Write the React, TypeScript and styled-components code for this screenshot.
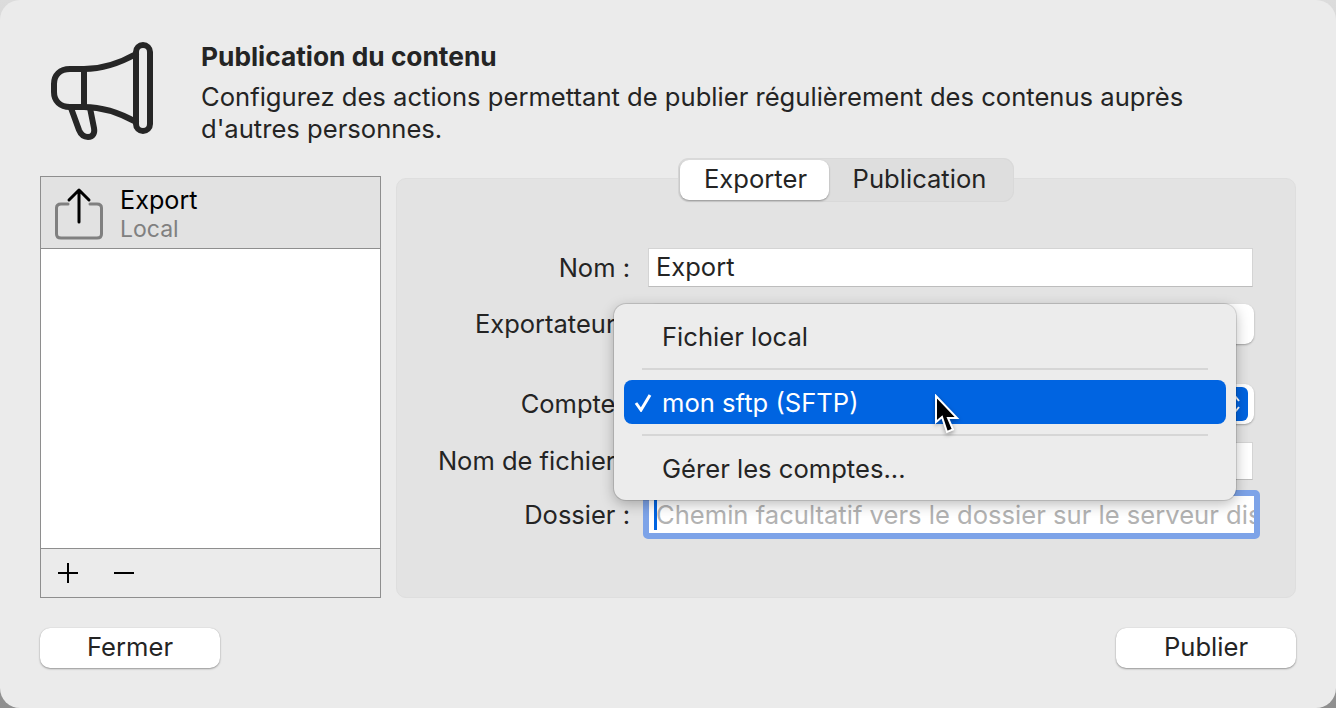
import styled, { createGlobalStyle } from "styled-components"

const GlobalStyle = createGlobalStyle`
  html, body {
    margin: 0;
    padding: 0;
    width: 1336px;
    height: 708px;
    overflow: hidden;
    background: linear-gradient(#dcdcdc, #8f8f8f);
  }
  * {
    box-sizing: border-box;
  }
`

const Window = styled.div`
  width: 1336px;
  height: 708px;
  padding: 40px 40px 0;
  border-radius: 20px;
  background-color: #ebebeb;
  color: #242424;
  font-family: Inter, "Noto Sans", sans-serif;
  font-size: 25.6px;
  line-height: 32px;
  display: flex;
  flex-direction: column;
`

const Header = styled.header`
  height: 136px;
  display: flex;
  align-items: flex-start;
`

const HeaderIcon = styled.svg`
  width: 110px;
  height: 104px;
  margin-left: 8px;
  margin-right: 43px;
  flex: none;
  color: #262626;
`

const HeaderText = styled.div`
  width: 1000px;
  padding-top: 1px;
`

const Title = styled.h1`
  margin: 0 0 8px;
  font-size: 26.3px;
  line-height: 32px;
  font-weight: 700;
`

const Description = styled.p`
  margin: 0;
  font-size: 25.6px;
  line-height: 32px;
`

const Main = styled.div`
  height: 422px;
  display: flex;
  gap: 15px;
`

const List = styled.aside`
  width: 341px;
  flex: none;
  border: 1px solid #8e8e8e;
  display: flex;
  flex-direction: column;
`

const ListItem = styled.div`
  height: 72px;
  padding-left: 12px;
  border-bottom: 1px solid #8e8e8e;
  background-color: #e2e2e2;
  display: flex;
  align-items: center;
  gap: 15px;
`

const ShareIcon = styled.svg`
  width: 52px;
  height: 56px;
  flex: none;
`

const ItemText = styled.div`
  display: flex;
  flex-direction: column;
  padding-top: 5px;
`

const ItemName = styled.span`
  color: #000;
  font-size: 25.2px;
  line-height: 29px;
`

const ItemKind = styled.span`
  color: #808080;
  font-size: 23px;
  line-height: 29px;
`

const ListBody = styled.div`
  flex: 1;
  background-color: #fff;
`

const ListFooter = styled.div`
  height: 49px;
  padding-left: 17px;
  border-top: 1px solid #8e8e8e;
  display: flex;
  align-items: center;
  gap: 36px;
`

const ToolIcon = styled.svg`
  width: 20px;
  height: 20px;
  flex: none;
`

const Panel = styled.section`
  flex: 1;
  position: relative;
  margin-top: 2px;
  padding: 69px 42px 0 0;
  border: 1px solid #dedede;
  border-radius: 10px;
  background-color: #e3e3e3;
`

const Tabs = styled.div`
  position: absolute;
  top: -21px;
  left: 281px;
  width: 336px;
  height: 44px;
  padding: 2px;
  border-radius: 11px;
  background-color: #dedede;
  box-shadow: inset 0 0 0 1px #d9d9d9;
  display: flex;
`

const Tab = styled.div<{ $active?: boolean }>`
  height: 40px;
  padding: ${p => (p.$active ? "0 0 2px 2px" : "0 2px 2px 0")};
  width: ${p => (p.$active ? "149px" : "183px")};
  border-radius: 9px;
  background-color: ${p => (p.$active ? "#fff" : "transparent")};
  box-shadow: ${p => (p.$active ? "0 1px 2px rgba(0, 0, 0, 0.35)" : "none")};
  display: flex;
  align-items: center;
  justify-content: center;
  font-size: 25.6px;
`

const Form = styled.div`
  display: flex;
  flex-direction: column;
`

const Row = styled.div<{ $top: number; $height: number }>`
  margin-top: ${p => p.$top}px;
  height: ${p => p.$height}px;
  display: grid;
  grid-template-columns: 233px 1fr;
  column-gap: 18px;
  align-items: center;
`

const Label = styled.label`
  text-align: right;
  font-size: 25.5px;
  white-space: nowrap;
`

const TextField = styled.div`
  height: 100%;
  padding: 0 7px 2px;
  background-color: #fff;
  border: 1px solid #d4d4d4;
  border-bottom-color: #bdbdbd;
  display: flex;
  align-items: center;
  font-size: 25.5px;
`

const PopupButton = styled.div`
  height: 100%;
  margin-right: -1px;
  padding: 0 6px;
  border-radius: 9px;
  background-color: #fff;
  box-shadow: 0 1px 2px rgba(0, 0, 0, 0.3);
  display: flex;
  align-items: center;
  justify-content: flex-end;
`

const Stepper = styled.div`
  width: 24px;
  height: 34px;
  border-radius: 6px;
  background-color: #0064e1;
  color: #fff;
  display: flex;
  align-items: center;
  justify-content: flex-end;
  padding-right: 8px;
`

const FocusField = styled.div`
  height: 100%;
  margin: 0 -7px 0 -5px;
  padding: 0 1px 0 5px;
  border: 6px solid #7da3e8;
  border-radius: 5px;
  background-color: #fff;
  display: flex;
  align-items: center;
  overflow: hidden;
`

const Caret = styled.span`
  width: 3px;
  height: 30px;
  margin-right: -1px;
  flex: none;
  background-color: #0064e1;
`

const Placeholder = styled.span`
  color: #b2b2b2;
  font-size: 25.6px;
  white-space: nowrap;
`

const Menu = styled.div`
  position: absolute;
  top: 125px;
  left: 217px;
  width: 622px;
  height: 196px;
  padding: 10px;
  border-radius: 12px;
  background-color: #ececec;
  box-shadow: 0 0 0 1px rgba(0, 0, 0, 0.12), 0 4px 14px rgba(0, 0, 0, 0.28);
`

const MenuItem = styled.div<{ $selected?: boolean }>`
  position: relative;
  height: 44px;
  padding: 2px 0 0 38px;
  border-radius: 8px;
  background-color: ${p => (p.$selected ? "#0064e1" : "transparent")};
  color: ${p => (p.$selected ? "#fff" : "#242424")};
  display: flex;
  align-items: center;
  font-size: 25.6px;
`

const Check = styled.svg`
  position: absolute;
  left: 10px;
  top: 14px;
  width: 20px;
  height: 18px;
`

const MenuSeparator = styled.div`
  height: 2px;
  margin: 10px 18px;
  background-color: #d6d6d6;
`

const Cursor = styled.svg`
  position: absolute;
  left: 320px;
  top: 90px;
  width: 27px;
  height: 40px;
  filter: drop-shadow(0 2px 2px rgba(0, 0, 0, 0.35));
`

const Footer = styled.footer`
  margin-top: 30px;
  display: flex;
  justify-content: space-between;
`

const Button = styled.button`
  width: 180px;
  height: 40px;
  padding: 0 0 3px;
  border: none;
  border-radius: 10px;
  background-color: #fff;
  box-shadow: 0 1px 2px rgba(0, 0, 0, 0.35), 0 0 1px rgba(0, 0, 0, 0.2);
  color: #242424;
  font-family: inherit;
  font-size: 25.6px;
`

export default function App() {
  return (
    <>
      <GlobalStyle />
      <Window>
        <Header>
          <HeaderIcon viewBox="48 40 110 104" fill="none" stroke="currentColor" strokeWidth="6" strokeLinecap="round" strokeLinejoin="round">
            <rect x="136" y="45" width="14" height="86" rx="7" />
            <path d="M136 54C120 63 102 69 84 69H70C60 69 54 75 54 84V92C54 101 60 107 70 107H84C102 107 120 113 136 122" />
            <path d="M84 69V107" />
            <path d="M71 108L79 130C81 135 84 137 88 137C93 137 95 133 94 128L90 108" />
          </HeaderIcon>
          <HeaderText>
            <Title>Publication du contenu</Title>
            <Description>Configurez des actions permettant de publier régulièrement des contenus auprès d'autres personnes.</Description>
          </HeaderText>
        </Header>
        <Main>
          <List>
            <ListItem>
              <ShareIcon viewBox="0 0 52 56" fill="none" strokeLinecap="round" strokeLinejoin="round">
                <path d="M15 19H8C5 19 3.500 20.500 3.500 23V49C3.500 51.500 5 53 8 53H44C47 53 48.500 51.500 48.500 49V23C48.500 20.500 47 19 44 19H37" stroke="#808080" strokeWidth="3" />
                <path d="M26 37V5M16 15L26 5L36 15" stroke="#000" strokeWidth="3" />
              </ShareIcon>
              <ItemText>
                <ItemName>Export</ItemName>
                <ItemKind>Local</ItemKind>
              </ItemText>
            </ListItem>
            <ListBody />
            <ListFooter>
              <ToolIcon viewBox="0 0 20 20" stroke="#000" strokeWidth="2">
                <path d="M0 10H20M10 0V20" />
              </ToolIcon>
              <ToolIcon viewBox="0 0 20 20" stroke="#000" strokeWidth="2">
                <path d="M0 10H20" />
              </ToolIcon>
            </ListFooter>
          </List>
          <Panel>
            <Tabs>
              <Tab $active>Exporter</Tab>
              <Tab>Publication</Tab>
            </Tabs>
            <Form>
              <Row $top={0} $height={39}>
                <Label>Nom :</Label>
                <TextField>Export</TextField>
              </Row>
              <Row $top={17} $height={40}>
                <Label>Exportateur :</Label>
                <PopupButton />
              </Row>
              <Row $top={40} $height={40}>
                <Label>Compte :</Label>
                <PopupButton>
                  <Stepper>
                    <svg width="10" height="22" viewBox="0 0 10 22" fill="none" stroke="currentColor" strokeWidth="2">
                      <path d="M1 8L5 3L9 8M1 14L5 19L9 14" />
                    </svg>
                  </Stepper>
                </PopupButton>
              </Row>
              <Row $top={18} $height={38}>
                <Label>Nom de fichier :</Label>
                <TextField />
              </Row>
              <Row $top={10} $height={49}>
                <Label>Dossier :</Label>
                <FocusField>
                  <Caret />
                  <Placeholder>Chemin facultatif vers le dossier sur le serveur dis</Placeholder>
                </FocusField>
              </Row>
            </Form>
            <Menu>
              <MenuItem>Fichier local</MenuItem>
              <MenuSeparator />
              <MenuItem $selected>
                <Check viewBox="0 0 20 18" fill="none" stroke="#fff" strokeWidth="3">
                  <path d="M2 9L7 16L16 1" />
                </Check>
                mon sftp (SFTP)
              </MenuItem>
              <MenuSeparator />
              <MenuItem>Gérer les comptes...</MenuItem>
              <Cursor viewBox="0 0 27 40">
                <path d="M2 2V28L8 23L13 38L19 35.500L14 24H23Z" fill="#000" stroke="#fff" strokeWidth="2" />
              </Cursor>
            </Menu>
          </Panel>
        </Main>
        <Footer>
          <Button>Fermer</Button>
          <Button>Publier</Button>
        </Footer>
      </Window>
    </>
  )
}
